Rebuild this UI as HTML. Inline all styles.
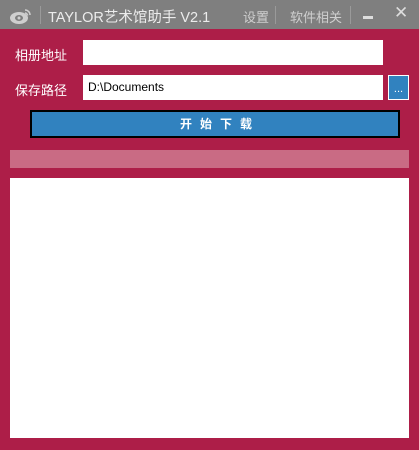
<!DOCTYPE html>
<html><head><meta charset="utf-8"><style>
*{margin:0;padding:0;box-sizing:border-box}
body{width:419px;height:450px;background:#ad1e48;position:relative;overflow:hidden;font-family:"Liberation Sans","Noto Sans CJK SC",sans-serif}
.t{position:absolute;white-space:nowrap}
.bar{position:absolute;left:0;top:0;width:419px;height:29px;background:#7f7f7f}
.sep{position:absolute;width:1px;height:18px;top:6px;background:#9a9a9a}
</style></head><body>
<div class="bar"></div>
<svg class="t" style="left:9px;top:7px" width="24" height="18" viewBox="0 0 24 18"><ellipse cx="10" cy="11" rx="9" ry="6" fill="#cfcfcf"/><ellipse cx="10" cy="11" rx="4" ry="3" fill="#7f7f7f"/><circle cx="10" cy="11" r="1.5" fill="#cfcfcf"/><path d="M16 3a5 5 0 0 1 5 5M16 6a2.5 2.5 0 0 1 2.5 2.5" stroke="#cfcfcf" stroke-width="1.5" fill="none"/></svg>
<div class="sep" style="left:40px"></div>
<div class="t" style="left:48px;top:6px;font-size:14.5px;color:#ececec">TAYLOR艺术馆助手 V2.1</div>
<div class="t" style="left:243px;top:7px;font-size:13px;color:#cfcfcf">设置</div>
<div class="sep" style="left:275px"></div>
<div class="t" style="left:290px;top:7px;font-size:13px;color:#cfcfcf">软件相关</div>
<div class="sep" style="left:350px"></div>
<div class="t" style="left:363px;top:16px;width:10px;height:3px;background:#ddd"></div>
<div class="t" style="left:394px;top:3px;font-size:17px;color:#ddd">✕</div>
<div class="t" style="left:15px;top:45px;font-size:13px;color:#fff">相册地址</div>
<div class="t" style="left:83px;top:40px;width:300px;height:25px;background:#fff"></div>
<div class="t" style="left:15px;top:80px;font-size:13px;color:#fff">保存路径</div>
<div class="t" style="left:83px;top:75px;width:300px;height:25px;background:#fff;font-size:12px;padding:5px 5px;color:#000">D:\Documents</div>
<div class="t" style="left:388px;top:75px;width:21px;height:25px;background:#3182bf;border:1px solid #fff;color:#fff;font-size:11px;text-align:center;line-height:26px">...</div>
<div class="t" style="left:30px;top:110px;width:370px;height:28px;background:#3182bf;border:2px solid #000;color:#fff;font-size:12px;font-weight:bold;text-align:center;line-height:24px;letter-spacing:8px;padding-left:10px">开始下载</div>
<div class="t" style="left:10px;top:150px;width:399px;height:18px;background:#c96b84"></div>
<div class="t" style="left:10px;top:178px;width:399px;height:260px;background:#fff"></div>
</body></html>
